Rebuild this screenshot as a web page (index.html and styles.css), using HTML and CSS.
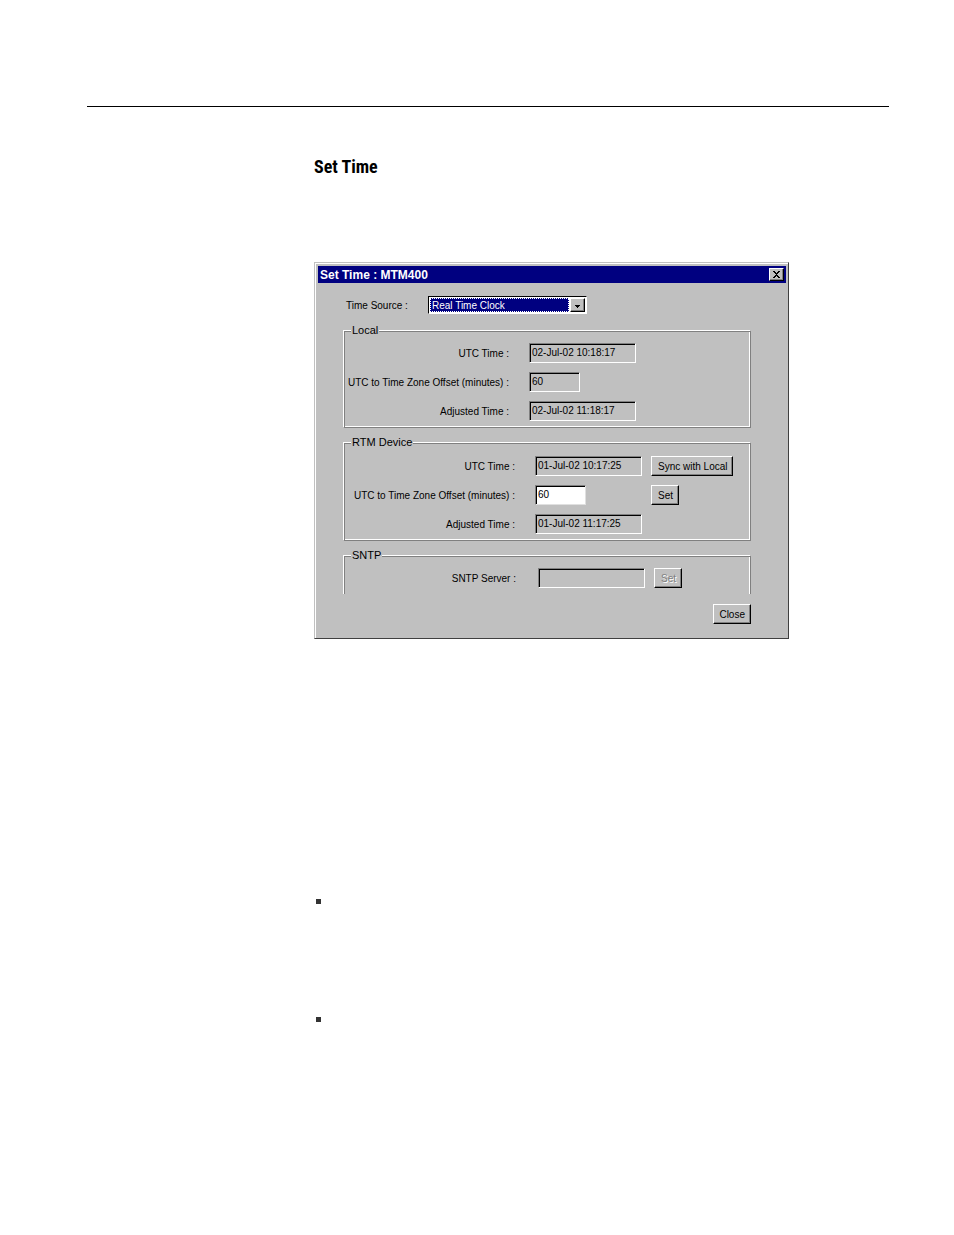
FILE: index.html
```html
<!DOCTYPE html>
<html lang="en">
<head>
    <meta charset="UTF-8">
    <meta name="viewport" content="width=device-width, initial-scale=1.0">
    <title>Set Time</title>
    <link rel="stylesheet" href="styles.css">
</head>
<body>
    <div class="page">
        <main class="content">
            <h1>Set Time</h1>

            <form class="dialog">
                <div class="titlebar">
                    <h2>Set Time : MTM400</h2>
                    <button type="button" class="close-x" aria-label="Close window">
                        <svg width="7" height="7" viewBox="0 0 7 7" shape-rendering="crispEdges"><path d="M0 0h2v1h1v1h1V1h1V0h2v1H6v1H5v1H4v1h1v1h1v1h1v1H5V6H4V5H3v1H2v1H0V6h1V5h1V4h1V3H2V2H1V1H0z"/></svg>
                    </button>
                </div>

                <div class="dialog-body">
                    <div class="source">
                        <label for="source">Time Source :</label>
                        <div class="combo">
                            <select id="source">
                                <option>Real Time Clock</option>
                            </select>
                            <span class="arrow">
                                <svg width="5" height="3" viewBox="0 0 5 3" shape-rendering="crispEdges"><path d="M0 0h5v1H4v1H3v1H2V2H1V1H0z"/></svg>
                            </span>
                        </div>
                    </div>

                    <fieldset class="local">
                        <legend>Local</legend>
                        <div class="row">
                            <label for="local-utc">UTC Time :</label>
                            <input type="text" id="local-utc" value="02-Jul-02 10:18:17" readonly>
                        </div>
                        <div class="row">
                            <label for="local-offset">UTC to Time Zone Offset (minutes) :</label>
                            <input type="text" id="local-offset" class="short" value="60" readonly>
                        </div>
                        <div class="row">
                            <label for="local-adjusted">Adjusted Time :</label>
                            <input type="text" id="local-adjusted" value="02-Jul-02 11:18:17" readonly>
                        </div>
                    </fieldset>

                    <fieldset class="device">
                        <legend>RTM Device</legend>
                        <div class="row">
                            <label for="device-utc">UTC Time :</label>
                            <input type="text" id="device-utc" value="01-Jul-02 10:17:25" readonly>
                            <button type="button">Sync with Local</button>
                        </div>
                        <div class="row">
                            <label for="device-offset">UTC to Time Zone Offset (minutes) :</label>
                            <div class="slot"><input type="text" id="device-offset" class="short" value="60"></div>
                            <button type="button">Set</button>
                        </div>
                        <div class="row">
                            <label for="device-adjusted">Adjusted Time :</label>
                            <input type="text" id="device-adjusted" value="01-Jul-02 11:17:25" readonly>
                        </div>
                    </fieldset>

                    <fieldset class="sntp">
                        <legend>SNTP</legend>
                        <div class="row">
                            <label for="sntp-server">SNTP Server :</label>
                            <input type="text" id="sntp-server" readonly>
                            <button type="button" disabled>Set</button>
                        </div>
                    </fieldset>

                    <div class="actions">
                        <button type="button">Close</button>
                    </div>
                </div>
            </form>

            <ul class="notes">
                <li></li>
                <li></li>
            </ul>
        </main>
    </div>
</body>
</html>
```
FILE: styles.css
```css
* {
    box-sizing: border-box;
}
body {
    margin: 0;
    background: #fff;
    color: #000;
    font-family: "Liberation Sans", Arial, sans-serif;
}
.page {
    margin: 106px 65px 0 87px;
    border-top: 1px solid #000;
}
.content {
    padding: 48px 0 0 227px;
}
h1 {
    margin: 0 0 83px;
    font: bold 18px/24px "Roboto Condensed", Roboto, sans-serif;
}

/* dialog window */
.dialog {
    width: 100%;
    max-width: 475px;
    padding: 2px;
    background: #c0c0c0;
    border: 1px solid;
    border-color: #c0c0c0 #404040 #404040 #c0c0c0;
    box-shadow: inset 1px 1px #fff;
    font-size: 10px;
    line-height: 16px;
}
.titlebar {
    display: flex;
    align-items: center;
    justify-content: space-between;
    height: 17px;
    margin: 1px 0 0 1px;
    padding: 0 2px;
    background: #000080;
    color: #fff;
}
.titlebar h2 {
    margin: 0;
    font-size: 12px;
}
.dialog-body {
    padding: 13px 35px 12px 26px;
}

/* controls */
button {
    height: 20px;
    padding: 0 5px 0 6px;
    background: #c0c0c0;
    color: #000;
    border: 1px solid;
    border-color: #fff #000 #000 #fff;
    border-radius: 0;
    box-shadow: inset -1px -1px #808080;
    font: inherit;
}
button:disabled {
    color: #808080;
    text-shadow: 1px 1px #fff;
}
.close-x {
    display: flex;
    align-items: center;
    justify-content: center;
    width: 15px;
    height: 13px;
    padding: 0;
}
input {
    width: 107px;
    height: 20px;
    padding: 0 2px 2px;
    background: #c0c0c0;
    color: #000;
    border: 1px solid;
    border-color: #808080 #fff #fff #808080;
    border-radius: 0;
    box-shadow: inset 1px 1px #000;
    font: inherit;
    outline: none;
}
input:not([readonly]) {
    background: #fff;
    border-color: #808080 #e0e0e0 #e0e0e0 #808080;
}
input.short {
    width: 51px;
}
.source {
    display: flex;
    align-items: center;
    margin-bottom: 9px;
}
.source label {
    width: 85px;
    padding: 2px 0 0 3px;
}
.combo {
    display: flex;
    width: 159px;
    height: 18px;
    border: 1px solid;
    border-color: #000 #fff #fff #000;
    padding: 1px;
    background: #fff;
}
.combo select {
    flex: 1;
    min-width: 0;
    padding: 1px 1px 0;
    appearance: none;
    background: #000080;
    color: #fff;
    border: 1px dotted #fff;
    border-radius: 0;
    font: inherit;
    line-height: 12px;
    outline: none;
}
.arrow {
    display: flex;
    align-items: center;
    justify-content: center;
    width: 15px;
    margin-left: 1px;
    padding: 2px 1px 0 0;
    background: #c0c0c0;
    border: 1px solid;
    border-color: #fff #000 #000 #fff;
    box-shadow: inset -1px -1px #808080;
}

/* group boxes */
fieldset {
    min-width: 0;
    margin: 0 0 7px;
    padding: 5px 0 6px;
    border: 1px solid;
    border-color: #fff #808080 #808080 #fff;
    box-shadow: inset 1px 1px #808080, inset -1px -1px #fff;
}
legend {
    margin-left: 7px;
    padding: 0 1px;
    background: #c0c0c0;
    font-size: 11px;
    line-height: 15px;
}
.row {
    display: flex;
    align-items: center;
    margin-bottom: 9px;
}
.row:last-child {
    margin-bottom: 0;
}
.row label {
    width: 165px;
    margin-right: 20px;
    padding-top: 2px;
    text-align: right;
    white-space: nowrap;
}
.row button {
    margin-left: 9px;
    padding-top: 1px;
}
.slot {
    width: 107px;
}
.device {
    padding-top: 6px;
}
.device label {
    width: 171px;
}
.sntp {
    margin-bottom: 10px;
    border-bottom: 0;
    box-shadow: inset 1px 1px #808080, inset -1px 0 #fff;
}
.sntp label {
    width: 172px;
    margin-right: 22px;
}
.actions {
    display: flex;
    justify-content: flex-end;
}
.actions button {
    padding: 1px 5px 0;
}

/* bullets */
.notes {
    margin: 260px 0 0;
    padding: 0 0 0 2px;
    list-style: none;
}
.notes li {
    height: 118px;
}
.notes li::before {
    content: "";
    display: block;
    width: 5px;
    height: 5px;
    background: #333;
}
```
